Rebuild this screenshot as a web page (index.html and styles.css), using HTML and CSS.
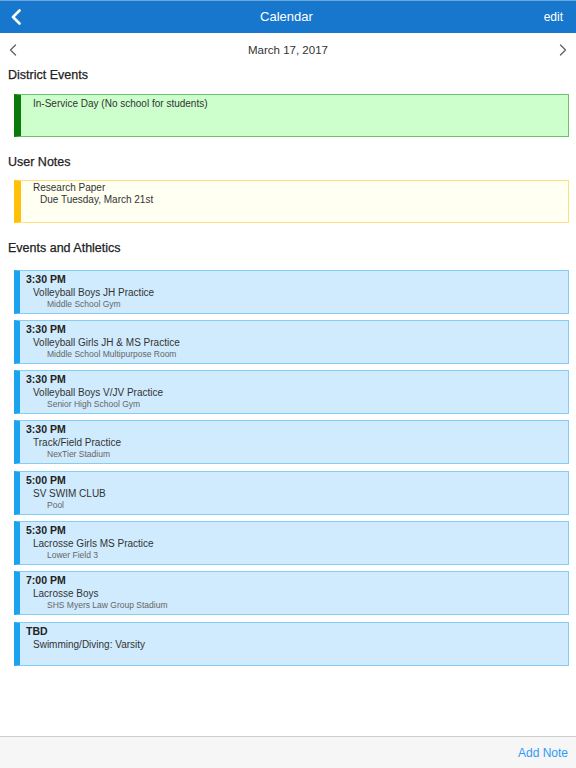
FILE: index.html
```html
<!DOCTYPE html>
<html lang="en">
<head>
    <meta charset="UTF-8">
    <meta name="viewport" content="width=device-width, initial-scale=1.0">
    <title>Calendar</title>
    <link rel="stylesheet" href="styles.css">
</head>
<body>
<div class="app">
    <!-- 顶部导航 -->
    <div class="navbar">
        <span class="nav-back">
            <svg width="12" height="16" viewBox="0 0 12 16"><path d="M9.5 1.5 L3 8 L9.5 14.5" fill="none" stroke="#fff" stroke-width="2.6" stroke-linecap="round" stroke-linejoin="round"/></svg>
        </span>
        <span class="nav-title">Calendar</span>
        <span class="nav-edit">edit</span>
    </div>

    <div class="date-row">
        <svg width="8" height="12" viewBox="0 0 8 12"><path d="M6.5 1 L1.5 6 L6.5 11" fill="none" stroke="#666" stroke-width="1.4" stroke-linecap="round" stroke-linejoin="round"/></svg>
        <span class="date">March 17, 2017</span>
        <svg width="8" height="12" viewBox="0 0 8 12"><path d="M1.5 1 L6.5 6 L1.5 11" fill="none" stroke="#666" stroke-width="1.4" stroke-linecap="round" stroke-linejoin="round"/></svg>
    </div>

    <div class="content">
        <h2 class="section-title first">District Events</h2>
        <div class="card district">
            <div class="card-text">In-Service Day (No school for students)</div>
        </div>

        <h2 class="section-title">User Notes</h2>
        <div class="card note">
            <div class="note-title">Research Paper</div>
            <div class="note-body">Due Tuesday, March 21st</div>
        </div>

        <h2 class="section-title">Events and Athletics</h2>
        <div class="events">
            <div class="card event">
                <div class="ev-time">3:30 PM</div>
                <div class="ev-name">Volleyball Boys JH Practice</div>
                <div class="ev-place">Middle School Gym</div>
            </div>
            <div class="card event">
                <div class="ev-time">3:30 PM</div>
                <div class="ev-name">Volleyball Girls JH &amp; MS Practice</div>
                <div class="ev-place">Middle School Multipurpose Room</div>
            </div>
            <div class="card event">
                <div class="ev-time">3:30 PM</div>
                <div class="ev-name">Volleyball Boys V/JV Practice</div>
                <div class="ev-place">Senior High School Gym</div>
            </div>
            <div class="card event">
                <div class="ev-time">3:30 PM</div>
                <div class="ev-name">Track/Field Practice</div>
                <div class="ev-place">NexTier Stadium</div>
            </div>
            <div class="card event">
                <div class="ev-time">5:00 PM</div>
                <div class="ev-name">SV SWIM CLUB</div>
                <div class="ev-place">Pool</div>
            </div>
            <div class="card event">
                <div class="ev-time">5:30 PM</div>
                <div class="ev-name">Lacrosse Girls MS Practice</div>
                <div class="ev-place">Lower Field 3</div>
            </div>
            <div class="card event">
                <div class="ev-time">7:00 PM</div>
                <div class="ev-name">Lacrosse Boys</div>
                <div class="ev-place">SHS Myers Law Group Stadium</div>
            </div>
            <div class="card event">
                <div class="ev-time">TBD</div>
                <div class="ev-name">Swimming/Diving: Varsity</div>
            </div>
        </div>
    </div>

    <div class="toolbar">
        <span class="add-note">Add Note</span>
    </div>
</div>
</body>
</html>
```

FILE: styles.css
```css
*{
    margin: 0;
    padding: 0;
    box-sizing: border-box;
}
body{
    font-family: "Liberation Sans", Arial, sans-serif;
    color: #333;
    background: #fff;
}
.app{
    height: 768px;
    display: flex;
    flex-direction: column;
}
.navbar{
    height: 33px;
    border-top: 1px solid #6aa5dc;
    background: #1677cd;
    color: #fff;
    display: flex;
    align-items: center;
    padding: 0 13px 1px 10px;
}
.nav-back{
    width: 60px;
    display: flex;
    align-items: center;
}
.nav-title{
    flex: 1;
    text-align: center;
    font-size: 13px;
}
.nav-edit{
    width: 60px;
    text-align: right;
    font-size: 12px;
}
.date-row{
    height: 34px;
    display: flex;
    align-items: center;
    justify-content: space-between;
    padding: 0 9px 0 9px;
}
.date{
    font-size: 11.5px;
    color: #333;
}
.content{
    flex: 1;
    padding: 0 7px 0 14px;
}
.section-title{
    font-size: 12.5px;
    line-height: 16px;
    font-weight: normal;
    color: #222;
    -webkit-text-stroke: 0.25px #222;
    margin: 17px 0 10.5px -6px;
}
.section-title.first{
    margin-top: 0;
}
.card{
    border: 1px solid;
    border-left-width: 7px;
    height: 43px;
    font-size: 10px;
}
.district{
    background: #ccffcc;
    border-color: #6ec06e;
    border-left-color: #0a7a0a;
    padding: 2px 0 0 12px;
    line-height: 13px;
}
.note{
    background: #fffff2;
    border-color: #ffe07e;
    border-left-color: #ffc107;
    padding: 1px 0 0 12px;
    line-height: 12px;
}
.note-body{
    padding-left: 7px;
}
.events{
    padding-top: 3px;
}
.event{
    height: 44px;
    margin-bottom: 6.3px;
    background: #cfebfd;
    border-color: #86cdf6;
    border-left-color: #1aa3ef;
    border-left-width: 6px;
    padding: 2px 0 0 6px;
}
.ev-time{
    font-weight: bold;
    font-size: 10.5px;
    line-height: 13px;
    color: #222;
}
.ev-name{
    line-height: 13px;
    padding-left: 7px;
}
.ev-place{
    font-size: 8.5px;
    line-height: 11px;
    color: #666;
    padding-left: 21px;
}
.toolbar{
    height: 32px;
    border-top: 1px solid #cfcfcf;
    background: #f6f6f6;
    display: flex;
    align-items: center;
    justify-content: flex-end;
    padding: 0 8px 0 0;
}
.add-note{
    font-size: 12px;
    color: #2e9af5;
}
```
